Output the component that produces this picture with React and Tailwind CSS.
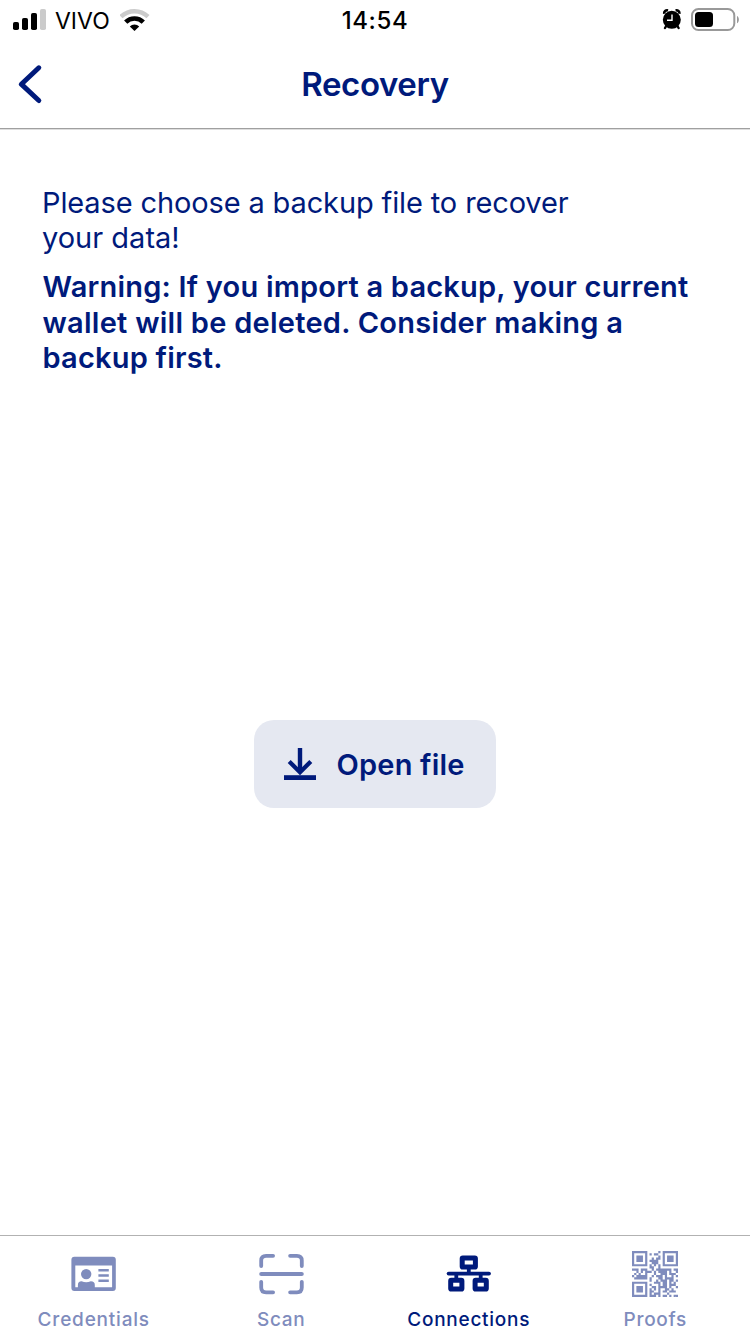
import React from "react";

const QR_ROWS = [
  "#######.....#.#######",
  "#.....#.#.##..#.....#",
  "#.###.#.....#.#.###.#",
  "#.###.#..#.##.#.###.#",
  "#.###.#.####..#.###.#",
  "#.....#..###..#.....#",
  "#######.#.#.#.#######",
  "........##..#........",
  "###.###..#.#######.##",
  "..#.#.###.#.####.#..#",
  ".#.#..#...#..###.###.",
  "#.#####..#.###.#..#.#",
  ".######.#...##.####..",
  "........#..#.###.##.#",
  "#######...###.##.#.#.",
  "#.....#.#...#.##.###.",
  "#.###.#..##.####.#..#",
  "#.###.#.#.#.#..##.#..",
  "#.###.#.##..#.##.###.",
  "#.....#.#.###...#....",
  "#######.###.#.##.#.##",
];

function StatusBar() {
  return (
    <div className="grid h-10 shrink-0 grid-cols-3 items-center text-black">
      <div className="flex h-10 items-center pl-[13px]">
        <svg className="h-10 w-[33px]" viewBox="13 0 33 40">
          <rect x="13" y="22" width="6" height="8" rx="1.8" />
          <rect x="22" y="18" width="6" height="12" rx="1.8" />
          <rect x="31" y="13" width="6" height="17" rx="1.8" />
          <rect x="40" y="9" width="6" height="21" rx="1.8" fill="#cbcbcb" />
        </svg>
        <span className="ml-[9px] w-[55px] pt-px text-[23px] leading-[38px]">VIVO</span>
        <svg className="ml-2.5 h-10 w-[30px]" viewBox="120 0 30 40" fill="none">
          <path d="M121 16.7A19.4 19.4 0 0 1 148 16.7" stroke="#cbcbcb" strokeWidth="4.4" />
          <path d="M125.7 22.1A12.4 12.4 0 0 1 143.3 22.1" stroke="#000" strokeWidth="4.6" />
          <path d="M134.5 31L129.8 26.4A6.6 6.6 0 0 1 139.2 26.4Z" fill="#000" />
        </svg>
      </div>
      <div className="pt-0.5 text-center text-[24px] font-medium leading-[38px] tracking-[0.6px]">14:54</div>
      <div className="flex h-10 justify-end">
        <svg className="h-10 w-[88px]" viewBox="662 0 88 40" fill="none">
          <circle cx="671.8" cy="19.8" r="9" fill="#000" />
          <path d="M664.2 13.8A3 3 0 0 1 668 10.4M675.6 10.4A3 3 0 0 1 679.4 13.8" stroke="#000" strokeWidth="2.6" />
          <path d="M666.5 25.5L665 28M677.1 25.5L678.6 28" stroke="#000" strokeWidth="2.4" strokeLinecap="round" />
          <path d="M672 14.5V20.3H667" stroke="#fff" strokeWidth="1.4" />
          <rect x="692" y="9" width="42.3" height="21" rx="6.5" stroke="#999" strokeWidth="2" />
          <rect x="695" y="12" width="18" height="15" rx="3.5" fill="#000" />
          <path d="M737 16C739.5 17 739.5 22.2 737 23.2Z" fill="#999" />
        </svg>
      </div>
    </div>
  );
}

function CredentialsIcon() {
  return (
    <svg className="h-[46px] w-[46px]" viewBox="0.4 0 46 46" fill="currentColor">
      <path fillRule="evenodd" d="M3.8 5.7H42.2A3 3 0 0 1 45.2 8.7V37A3 3 0 0 1 42.2 40H3.8A3 3 0 0 1 .8 37V8.7A3 3 0 0 1 3.8 5.7ZM4.7 14.4V36.2H41.5V14.4Z" />
      <circle cx="15.6" cy="23.1" r="5.2" />
      <path d="M7.3 37V34Q7.3 30.3 11 30.3Q15.6 32 20.2 30.3Q24.2 30.3 24.2 34V37Z" />
      <path d="M27.8 18H38.2V20.5H27.8ZM27.8 23.3H38.2V25.8H27.8ZM27.8 28.6H38.2V31.1H27.8Z" />
    </svg>
  );
}

function ScanIcon() {
  return (
    <svg className="h-[46px] w-[46px]" viewBox="-0.9 0 46 46" fill="none" stroke="currentColor" strokeWidth="3.8" strokeLinecap="round">
      <path d="M2.3 15V9.5Q2.3 4.8 7.2 4.8H14.2M31.2 4.8H38Q42.9 4.8 42.9 9.5V15M2.3 30.8V36.5Q2.3 41.3 7.2 41.3H14.2M31.2 41.3H38Q42.9 41.3 42.9 36.5V30.8" />
      <path d="M2.4 23H42.8" strokeWidth="4.2" />
    </svg>
  );
}

function ConnectionsIcon() {
  return (
    <svg className="h-[46px] w-[46px]" viewBox="0 0 46 46" fill="none" stroke="currentColor">
      <rect x="16.2" y="7" width="13.2" height="9" rx=".6" strokeWidth="5" strokeLinejoin="round" />
      <rect x="4.7" y="29.3" width="11.2" height="8.8" rx=".6" strokeWidth="5" strokeLinejoin="round" />
      <rect x="29.1" y="29.3" width="11.2" height="8.8" rx=".6" strokeWidth="5" strokeLinejoin="round" />
      <path d="M22.8 17V22M10.3 23V28M34.7 23V28" strokeWidth="3.8" />
      <path d="M2.6 22.6H43" strokeWidth="3.8" strokeLinecap="round" />
    </svg>
  );
}

function ProofsIcon() {
  const cells = QR_ROWS.flatMap((row, y) =>
    [...row].map((c, x) => (c === "#" ? `M${x} ${y}h1v1h-1z` : "")),
  ).join("");
  return (
    <svg className="h-[46px] w-[46px]" viewBox="0 0 21 21" fill="currentColor">
      <path d={cells} />
    </svg>
  );
}

function Tab({ icon, label, className }) {
  return (
    <div className={`flex flex-col items-center text-[19px] font-medium ${className}`}>
      {icon}
      <span className="mt-2.5 leading-[26px]">{label}</span>
    </div>
  );
}

export default function App() {
  return (
    <div className="flex h-[1334px] w-[750px] flex-col overflow-hidden bg-white font-['Inter',sans-serif] text-[#001a7b]">
      <StatusBar />
      <header className="grid h-[89px] shrink-0 grid-cols-3 items-center border-b border-[#a0a0a0] shadow-[0_1px_0_#dedede]">
        <svg className="ml-4 h-11 w-8" viewBox="16 62 32 44" fill="none" stroke="currentColor" strokeWidth="5" strokeLinecap="round" strokeLinejoin="round">
          <path d="M38.8 67.8L21.3 84.2L38.8 100.5" />
        </svg>
        <h1 className="text-center text-[33px] font-semibold leading-[44px] tracking-[-0.4px]">Recovery</h1>
      </header>

      <main className="flex grow flex-col">
        <div className="whitespace-nowrap pl-[42px] pt-14 text-[29px]">
          <p className="leading-[35px]">
            <span className="block tracking-[-0.13px]">Please choose a backup file to recover</span>
            <span className="block">your data!</span>
          </p>
          <p className="mt-3.5 pl-[0.5px] font-semibold leading-[35.5px]">
            <span className="block tracking-[0.21px]">Warning: If you import a backup, your current</span>
            <span className="block tracking-[0.26px]">wallet will be deleted. Consider making a</span>
            <span className="block tracking-[0.2px]">backup first.</span>
          </p>
        </div>
        <button className="mt-[344.5px] flex h-[88px] w-[242px] shrink-0 items-center self-center rounded-[20px] bg-[#e5e8f1] pl-[30px]">
          <svg className="h-8 w-8" viewBox="0 0 32 32" fill="none" stroke="currentColor">
            <path d="M16 0V24" strokeWidth="4.4" />
            <path d="M5.2 13.4L16 24.2L26.8 13.4" strokeWidth="4.2" />
            <path d="M0 29.6H32" strokeWidth="4.8" />
          </svg>
          <span className="ml-[20.5px] pt-px text-[29px] font-semibold leading-[36px] tracking-[0.2px]">Open file</span>
        </button>
      </main>

      <nav className="grid h-[99px] shrink-0 grid-cols-4 border-t border-[#b2b2b2] pt-[15px]">
        <Tab icon={<CredentialsIcon />} label="Credentials" className="tracking-[0.8px] text-[#7f8cbd]" />
        <Tab icon={<ScanIcon />} label="Scan" className="tracking-[0.7px] text-[#7f8cbd]" />
        <Tab icon={<ConnectionsIcon />} label="Connections" className="tracking-[0.75px]" />
        <Tab icon={<ProofsIcon />} label="Proofs" className="pr-0.5 tracking-[0.7px] text-[#7f8cbd]" />
      </nav>
    </div>
  );
}
